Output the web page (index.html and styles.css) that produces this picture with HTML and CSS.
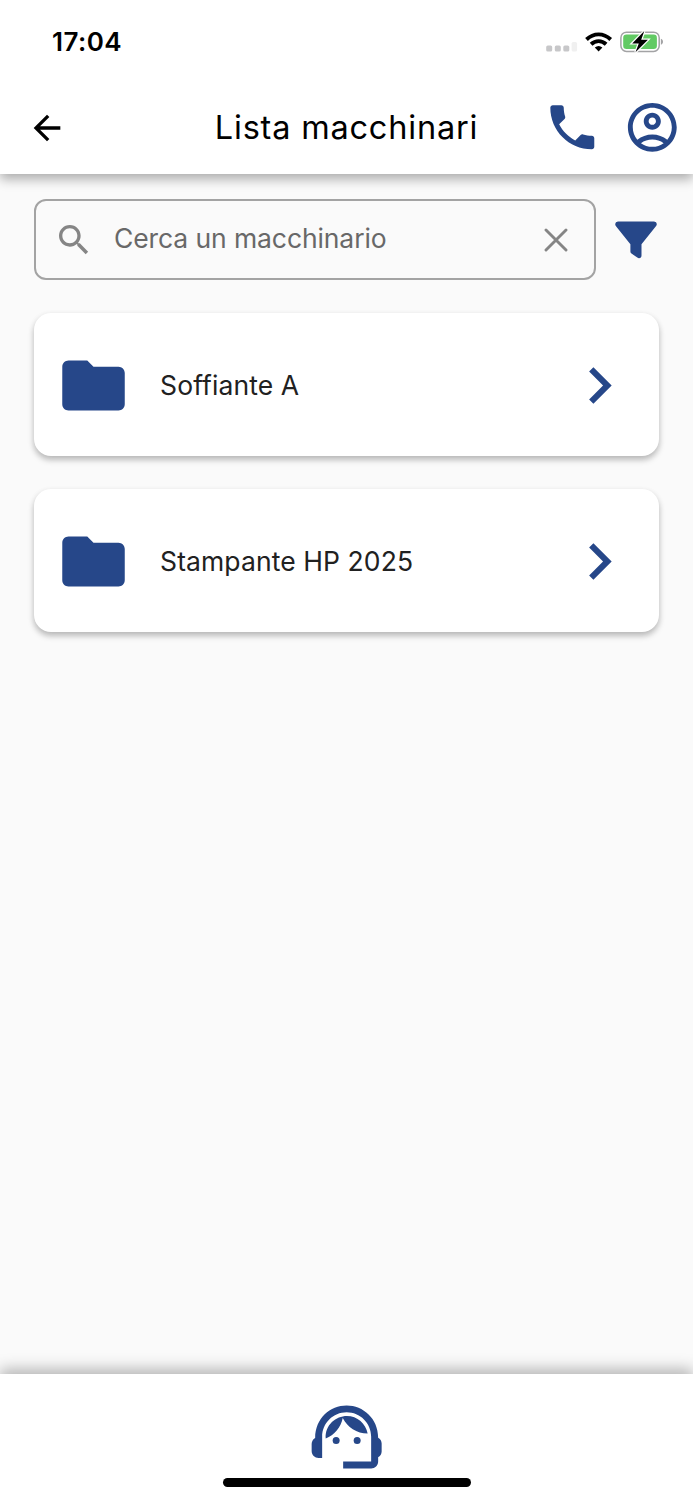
FILE: index.html
```html
<!DOCTYPE html>
<html lang="it">
<head>
<meta charset="utf-8">
<meta name="viewport" content="width=device-width, initial-scale=1">
<title>Lista macchinari</title>
<link rel="stylesheet" href="styles.css">
</head>
<body>
<div class="screen">
  <header class="header">
    <div class="status">
      <span class="clock">17:04</span>
      <svg class="status-icons" width="120" height="30" viewBox="0 0 120 30">
        <g fill="#c7c7c9"><rect x="1.2" y="15.5" width="6" height="6" rx="1.6"/><rect x="9.8" y="15.5" width="6" height="6" rx="1.6"/><rect x="18.3" y="15.5" width="6" height="6" rx="1.6"/></g>
        <rect x="26.6" y="12" width="5.5" height="9.5" rx="1.6" fill="#f0f0f0"/>
        <g fill="none" stroke="#000" stroke-width="3.9">
          <path d="M41.5 9.5C48.7 2.6 58.5 2.6 65.7 9.5"/>
          <path d="M46.1 14.2C50.5 10.1 56.7 10.1 61.1 14.2"/>
        </g>
        <path d="M49.8 17.6Q53.6 14.4 57.4 17.6L53.6 21.5Z"/>
        <rect x="75.9" y="2.2" width="38.3" height="19.2" rx="5.6" fill="#fff" stroke="#a3a3a5" stroke-width="1.5"/>
        <rect x="78.2" y="4.6" width="33.7" height="14.4" rx="3.3" fill="#62ca64"/>
        <path d="M115.9 8.7c2.8.8 2.8 5.2 0 6z" fill="#a3a3a5"/>
        <path d="M99.3 1L87.2 13.4h6.6l-3.3 8.9L102.9 9.8h-6.7z" fill="#000" stroke="#fff" stroke-width="2.4" paint-order="stroke"/>
      </svg>
    </div>
    <div class="appbar">
      <svg class="back" width="40" height="40" viewBox="0 0 24 24"><path d="M20 11H7.83l5.59-5.59L12 4l-8 8 8 8 1.41-1.41L7.83 13H20v-2z"/></svg>
      <h1 class="title">Lista macchinari</h1>
      <div class="actions">
        <svg width="58.6" height="58.6" viewBox="0 0 24 24"><path d="M6.62 10.79c1.44 2.83 3.76 5.14 6.59 6.59l2.2-2.2c.27-.27.67-.36 1.02-.24 1.12.37 2.33.57 3.57.57.55 0 1 .45 1 1V20c0 .55-.45 1-1 1-9.39 0-17-7.61-17-17 0-.55.45-1 1-1h3.5c.55 0 1 .45 1 1 0 1.25.2 2.45.57 3.57.11.35.03.74-.25 1.02l-2.2 2.2z"/></svg>
        <svg width="58.6" height="58.6" viewBox="0 0 24 24"><path d="M12 2C6.48 2 2 6.48 2 12s4.48 10 10 10 10-4.48 10-10S17.52 2 12 2zM7.35 18.5C8.66 17.56 10.26 17 12 17s3.34.56 4.65 1.5C15.34 19.44 13.74 20 12 20s-3.34-.56-4.65-1.5zm10.79-1.38C16.45 15.8 14.32 15 12 15s-4.45.8-6.14 2.12C4.7 15.73 4 13.95 4 12c0-4.42 3.58-8 8-8s8 3.58 8 8c0 1.95-.7 3.73-1.86 5.12z"/><path d="M12 6c-1.93 0-3.5 1.57-3.5 3.5S10.07 13 12 13s3.5-1.57 3.5-3.5S13.93 6 12 6zm0 5c-.83 0-1.5-.67-1.5-1.5S11.17 8 12 8s1.5.67 1.5 1.5S12.83 11 12 11z"/></svg>
      </div>
    </div>
  </header>

  <main class="content">
    <div class="search-row">
      <div class="search">
        <svg class="search-icon" width="40" height="40" viewBox="0 0 24 24"><path d="M15.5 14h-.79l-.28-.27C15.41 12.59 16 11.11 16 9.5 16 5.91 13.09 3 9.5 3S3 5.91 3 9.5 5.91 16 9.5 16c1.61 0 3.09-.59 4.23-1.57l.27.28v.79l5 4.99L20.49 19l-4.99-5zm-6 0C7.01 14 5 11.99 5 9.5S7.01 5 9.5 5 14 7.01 14 9.5 11.99 14 9.5 14z"/></svg>
        <span class="placeholder">Cerca un macchinario</span>
        <svg class="clear" width="24" height="24" viewBox="0 0 24 24"><path d="M2 2l20 20M22 2l-20 20"/></svg>
      </div>
      <svg class="filter" width="42" height="38" viewBox="0 0 42 38"><path d="M3 .5H39Q41.7.7 41.8 3.1 41.8 4.3 40.9 5.3L26.5 23.3V34.5Q26.4 37.2 24 37.2 23.2 37.2 22.3 36.6L16.5 32.6Q15.4 31.8 15.4 30.5V23.3L1 5.3Q.2 4.3.2 3.1.4.7 3 .5Z"/></svg>
    </div>

    <section class="card">
      <svg class="folder" width="75" height="75" viewBox="0 0 24 24"><path d="M10 4H4c-1.1 0-1.99.9-1.99 2L2 18c0 1.1.9 2 2 2h16c1.1 0 2-.9 2-2V8c0-1.1-.9-2-2-2h-8l-2-2z"/></svg>
      <span class="name">Soffiante A</span>
      <svg class="chevron" width="73" height="73" viewBox="0 0 24 24"><path d="M10 6L8.59 7.41 13.17 12l-4.58 4.59L10 18l6-6z"/></svg>
    </section>
    <section class="card">
      <svg class="folder" width="75" height="75" viewBox="0 0 24 24"><path d="M10 4H4c-1.1 0-1.99.9-1.99 2L2 18c0 1.1.9 2 2 2h16c1.1 0 2-.9 2-2V8c0-1.1-.9-2-2-2h-8l-2-2z"/></svg>
      <span class="name">Stampante HP 2025</span>
      <svg class="chevron" width="73" height="73" viewBox="0 0 24 24"><path d="M10 6L8.59 7.41 13.17 12l-4.58 4.59L10 18l6-6z"/></svg>
    </section>
  </main>

  <footer class="footer">
    <svg class="agent" width="84" height="84" viewBox="0.1 0 24 24"><path d="M21 12.22C21 6.73 16.74 3 12 3c-4.69 0-9 3.65-9 9.28-.6.34-1 .98-1 1.72v2c0 1.1.9 2 2 2h1v-6.1c0-3.87 3.13-7 7-7s7 3.13 7 7V19h-8v2h8c1.1 0 2-.9 2-2v-1.22c.59-.31 1-.92 1-1.64v-2.3c0-.7-.41-1.31-1-1.62z"/><circle cx="9" cy="13" r="1"/><circle cx="15" cy="13" r="1"/><path d="M18 11.03C17.52 8.18 15.04 6 12.05 6c-3.03 0-6.29 2.51-6.03 6.45 2.47-1.01 4.33-3.21 4.86-5.89 1.31 2.63 4 4.44 7.12 4.47z"/></svg>
    <div class="home-indicator"></div>
  </footer>
</div>
</body>
</html>
```
FILE: styles.css
```css
* { box-sizing: border-box; }
body {
  margin: 0;
  background: #fafafa;
  font-family: Inter, "Liberation Sans", sans-serif;
}
svg { display: block; flex: none; }
.screen {
  display: flex;
  flex-direction: column;
  height: 1500px;
  overflow: hidden;
}
.header {
  height: 174px;
  background: #fff;
  box-shadow: 0 5px 11px rgba(0, 0, 0, .32);
}
.status {
  display: flex;
  justify-content: space-between;
  height: 80px;
  padding: 30px 28px 0 52px;
}
.clock {
  font-size: 26px;
  font-weight: 600;
  line-height: 24px;
  letter-spacing: .45px;
}
.appbar {
  display: grid;
  grid-template-columns: 148px 1fr 148px;
  align-items: center;
  height: 95px;
}
.back { margin-left: 27px; }
.title {
  margin: 0;
  font-size: 32.5px;
  font-weight: 400;
  line-height: 40px;
  letter-spacing: .8px;
  text-align: center;
  white-space: nowrap;
}
.actions {
  display: flex;
  gap: 21.5px;
  justify-content: flex-end;
  padding-right: 11px;
  fill: #264789;
}
.content {
  display: flex;
  flex: 1;
  flex-direction: column;
  gap: 33px;
  padding: 25px 34px 0;
}
.search-row {
  display: flex;
  gap: 19.5px;
  align-items: center;
  margin-right: -10px;
}
.search {
  display: flex;
  align-items: center;
  width: 561.5px;
  height: 81px;
  padding: 0 26px 0 18px;
  border: 2px solid #a3a3a3;
  border-radius: 12px;
}
.search-icon { fill: #858585; }
.placeholder {
  flex: 1;
  margin-left: 20px;
  padding-bottom: 3px;
  color: #686868;
  font-size: 26.5px;
  line-height: 34px;
  letter-spacing: -.1px;
}
.clear {
  fill: none;
  stroke: #858585;
  stroke-width: 2.9;
  stroke-linecap: round;
}
.filter { fill: #264789; }
.card {
  display: flex;
  align-items: center;
  height: 143px;
  padding: 1px 22.6px 0 21.6px;
  border-radius: 17px;
  background: #fff;
  box-shadow: 0 4px 6px rgba(0, 0, 0, .22), 0 2px 6px rgba(0, 0, 0, .08);
}
.folder, .chevron, .agent { fill: #264789; }
.name {
  flex: 1;
  margin-left: 29.5px;
  padding-bottom: 1px;
  color: #212121;
  font-size: 26.5px;
  line-height: 34px;
  letter-spacing: .09px;
}
.footer {
  display: flex;
  flex-direction: column;
  align-items: center;
  height: 126px;
  padding-top: 21px;
  background: #fff;
  box-shadow: 0 -5px 14px rgba(0, 0, 0, .28);
}
.home-indicator {
  width: 248px;
  height: 8.5px;
  margin-top: -1px;
  border-radius: 5px;
  background: #000;
}
```
